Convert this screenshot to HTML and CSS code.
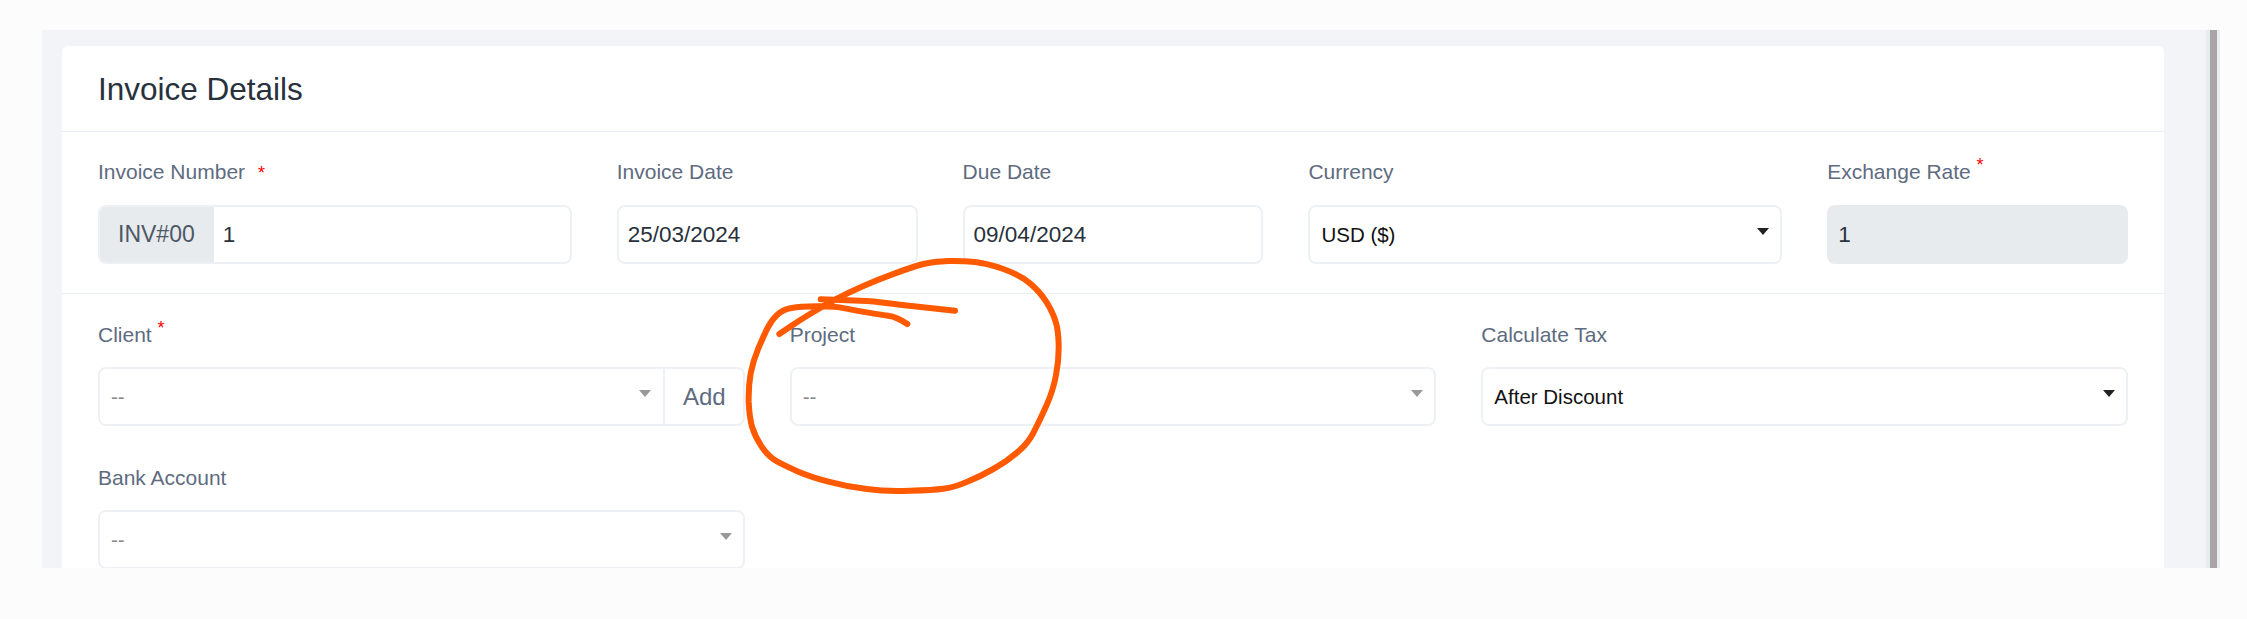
FILE: index.html
```html
<!DOCTYPE html>
<html lang="en">
<head>
  <meta charset="UTF-8" />
  <title>Invoice Details</title>
  <link rel="stylesheet" href="styles.css">
</head>
<body>
  <div class="frame">
    <div class="content">
      <div class="card">
        <h1 class="card-title">Invoice Details</h1>

        <div class="form-row row-top">
          <div class="col-3">
            <label class="label">Invoice Number <span class="req req-inline">*</span></label>
            <div class="control">
              <span class="prefix">INV#00</span>
              <input class="text-input" type="text" value="1">
            </div>
          </div>
          <div class="col-2">
            <label class="label">Invoice Date</label>
            <div class="control"><input class="text-input" type="text" value="25/03/2024"></div>
          </div>
          <div class="col-2">
            <label class="label">Due Date</label>
            <div class="control"><input class="text-input" type="text" value="09/04/2024"></div>
          </div>
          <div class="col-3">
            <label class="label">Currency</label>
            <div class="control select">
              <span class="select-value">USD ($)</span>
              <span class="caret"></span>
            </div>
          </div>
          <div class="col-2">
            <label class="label">Exchange Rate <sup class="req">*</sup></label>
            <div class="control disabled"><input class="text-input" type="text" value="1" readonly></div>
          </div>
        </div>

        <div class="form-row row-bottom">
          <div class="col-4">
            <label class="label">Client <sup class="req">*</sup></label>
            <div class="control select">
              <span class="select-value muted">--</span>
              <span class="caret caret-muted"></span>
              <span class="addon">Add</span>
            </div>
          </div>
          <div class="col-4">
            <label class="label">Project</label>
            <div class="control select">
              <span class="select-value muted">--</span>
              <span class="caret caret-muted"></span>
            </div>
          </div>
          <div class="col-4">
            <label class="label">Calculate Tax</label>
            <div class="control select">
              <span class="select-value">After Discount</span>
              <span class="caret"></span>
            </div>
          </div>
          <div class="col-4 bank">
            <label class="label">Bank Account</label>
            <div class="control select">
              <span class="select-value muted">--</span>
              <span class="caret caret-muted"></span>
            </div>
          </div>
        </div>
      </div>
    </div>
    <div class="scrollbar"><div class="thumb"></div></div>
  </div>

  <!-- hand drawn mark on top of the screenshot -->
  <svg class="scribble" viewBox="0 0 1200 900" fill="none">
    <path d="M238 342 L269 321 Q300 300 335 279 Q370 258 405 239 Q440 220 485 200 Q530 180 585 160 Q640 140 670 132 Q700 125 745 123 Q790 122 825 126 Q860 130 910 147 Q960 165 990 190 Q1020 215 1040 247 Q1060 280 1067 305 Q1075 330 1076 375 Q1077 420 1068 465 Q1060 510 1040 555 Q1020 600 1002 635 Q985 670 952 697 Q920 725 880 747 Q840 770 800 786 Q760 803 730 806 Q700 810 630 812 Q560 815 500 807 Q440 800 385 785 Q330 770 295 755 Q260 740 232 725 Q205 710 185 680 Q165 650 156 620 Q148 590 146 545 Q145 500 152 460 Q160 420 175 385 Q190 350 202 325 Q215 300 232 284 Q250 268 275 264 Q300 260 350 259 Q400 258 435 265 Q470 272 505 278 Q540 284 565 287 Q590 290 622 312"/>
    <path d="M362 238 L500 243 Q540 246 600 254 L765 272"/>
  </svg>
</body>
</html>
```

FILE: styles.css
```css
html, body {
  margin: 0;
  height: 100%;
  overflow: hidden;
}
body {
  background-color: #fcfcfd;
  font-family: "Liberation Sans", sans-serif;
  color: #28313c;
}
.frame {
  display: flex;
  box-sizing: border-box;
  width: 2178px;
  height: 538px;
  margin: 30px 0 0 42px;
  background-color: #f2f4f7;
  overflow: hidden;
}
.content {
  flex: 1;
  padding: 16px 42px 0 20px;
}
.scrollbar {
  box-sizing: border-box;
  width: 14px;
  padding: 0 3px 0 4px;
  background-color: #e8ebf0;
}
.thumb {
  height: 100%;
  background-color: #a9a5a6;
}
.card {
  background-color: #fff;
  border-radius: 6px 6px 0 0;
  height: 600px;
}
.card-title {
  box-sizing: border-box;
  height: 86px;
  margin: 0;
  padding: 0 36px;
  border-bottom: 1px solid #e8eef3;
  font-size: 31.5px;
  font-weight: 400;
  line-height: 86px;
}
.form-row {
  display: grid;
  grid-template-columns: repeat(12, 1fr);
  column-gap: 45px;
  padding: 0 36px;
}
.row-top {
  height: 162px;
  padding-top: 26px;
  box-sizing: border-box;
  border-bottom: 1px solid #e8eef3;
}
.row-bottom {
  padding-top: 27px;
}
.col-2 { grid-column: span 2; }
.col-3 { grid-column: span 3; }
.col-4 { grid-column: span 4; }
.bank {
  margin-top: 38px;
}
.label {
  display: block;
  height: 28px;
  margin-bottom: 19px;
  font-size: 21px;
  line-height: 28px;
  color: #5e6b80;
  white-space: nowrap;
}
.row-bottom .label {
  margin-bottom: 18px;
}
.req {
  color: #f00;
  font-size: 18px;
  line-height: 0;
}
.req-inline {
  margin-left: 7px;
}
.control {
  display: flex;
  align-items: center;
  box-sizing: border-box;
  height: 59px;
  border: 2px solid #edf1f5;
  border-radius: 8px;
  background-color: #fff;
  overflow: hidden;
}
.prefix {
  align-self: stretch;
  display: flex;
  align-items: center;
  margin: -2px 0 -2px -2px;
  padding: 0 19px 0 20px;
  background-color: #e8ebee;
  font-size: 23px;
  color: #4d5866;
}
.text-input {
  flex: 1;
  min-width: 0;
  height: 100%;
  padding: 0 9px;
  border: none;
  outline: none;
  background: transparent;
  font-family: inherit;
  font-size: 22.5px;
  color: #28313c;
}
.disabled {
  background-color: #e8ebee;
  border-color: #e8ebee;
}
.select {
  padding-left: 11px;
}
.select-value {
  flex: 1;
  font-size: 20.5px;
  color: #111;
}
.muted {
  color: #8a8a8a;
}
.caret {
  width: 0;
  height: 0;
  margin: -6px 11px 0 0;
  border-left: 6px solid transparent;
  border-right: 6px solid transparent;
  border-top: 7px solid #222;
}
.caret-muted {
  border-top-color: #999;
}
.addon {
  align-self: stretch;
  display: flex;
  align-items: center;
  margin-left: 1px;
  padding: 0 17px 0 18px;
  border-left: 2px solid #edf1f5;
  font-size: 24px;
  color: #5e6b80;
}
.scribble {
  position: absolute;
  left: 700px;
  top: 220px;
  width: 400px;
  height: 300px;
  stroke: #ff5a00;
  stroke-width: 18;
  stroke-linecap: round;
  stroke-linejoin: round;
}
```
